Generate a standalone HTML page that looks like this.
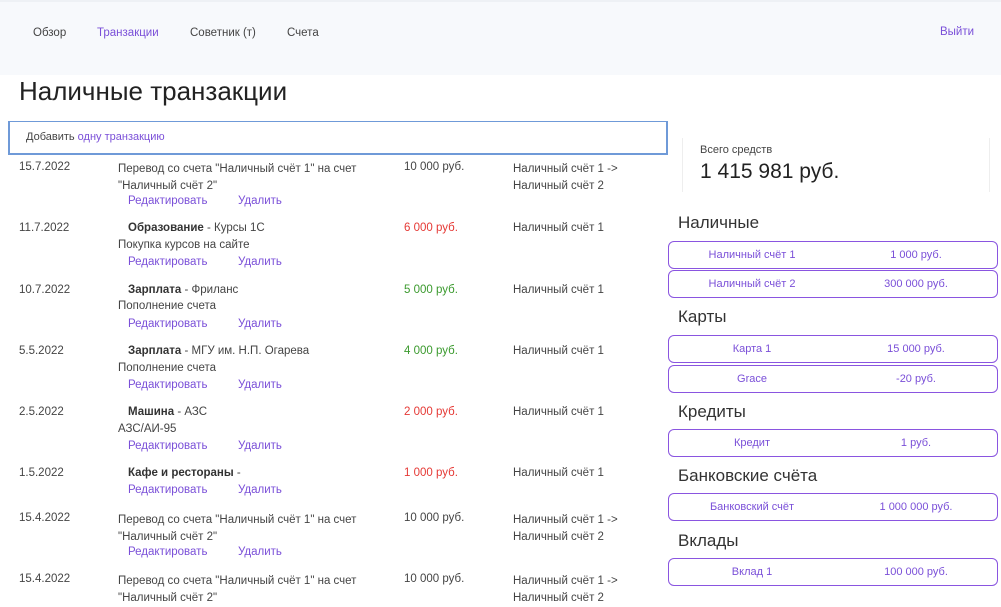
<!DOCTYPE html><html><head><meta charset="utf-8"><style>
*{margin:0;padding:0;box-sizing:border-box}
body{width:1001px;height:595px;overflow:hidden;background:#fff;font-family:"Liberation Sans",sans-serif;color:#444;font-size:11.5px;position:relative}
.a{position:absolute;white-space:nowrap}
.nav{position:absolute;left:0;top:0;width:1001px;height:75px;background:#f7f9fc;border-top:2px solid #eef1f5}
.p{color:#7a4fd8}
.r{color:#e53935}.g{color:#3b9a2e}
b{color:#333}
.pill{position:absolute;left:668px;width:330px;height:28px;border:1px solid #8a55e0;border-radius:6px;color:#7a4fd8;font-size:11px}
.pill span{position:absolute;top:7px;transform:translateX(-50%)}
.h{position:absolute;left:678px;font-size:17px;color:#333}
</style></head><body>
<div class="nav"></div>
<div class="a" style="left:33px;top:27px">Обзор</div>
<div class="a p" style="left:97px;top:27px">Транзакции</div>
<div class="a" style="left:190px;top:27px">Советник (т)</div>
<div class="a" style="left:287px;top:27px">Счета</div>
<div class="a p" style="left:940px;top:26px">Выйти</div>
<div class="a" style="left:19px;top:76px;font-size:26px;color:#222">Наличные транзакции</div>
<div class="a" style="left:8px;top:121px;width:660px;height:34px;border:2px solid #6f9ad8;border-top-width:1px"></div>
<div class="a" style="left:26px;top:131px;font-size:11px">Добавить <span class="p">одну транзакцию</span></div>

<div class="a" style="left:19px;top:161px">15.7.2022</div>
<div class="a" style="left:118px;top:161px;line-height:17px">Перевод со счета "Наличный счёт 1" на счет<br>"Наличный счёт 2"</div>
<div class="a" style="left:404px;top:161px">10 000 руб.</div>
<div class="a" style="left:513px;top:161px;line-height:17px">Наличный счёт 1 -&gt;<br>Наличный счёт 2</div>
<div class="a p" style="left:128px;top:195px">Редактировать</div><div class="a p" style="left:238px;top:195px">Удалить</div>

<div class="a" style="left:19px;top:222px">11.7.2022</div>
<div class="a" style="left:128px;top:222px"><b>Образование</b> - Курсы 1С</div>
<div class="a" style="left:118px;top:239px">Покупка курсов на сайте</div>
<div class="a r" style="left:404px;top:222px">6 000 руб.</div>
<div class="a" style="left:513px;top:222px">Наличный счёт 1</div>
<div class="a p" style="left:128px;top:256px">Редактировать</div><div class="a p" style="left:238px;top:256px">Удалить</div>

<div class="a" style="left:19px;top:284px">10.7.2022</div>
<div class="a" style="left:128px;top:284px"><b>Зарплата</b> - Фриланс</div>
<div class="a" style="left:118px;top:300px">Пополнение счета</div>
<div class="a g" style="left:404px;top:284px">5 000 руб.</div>
<div class="a" style="left:513px;top:284px">Наличный счёт 1</div>
<div class="a p" style="left:128px;top:318px">Редактировать</div><div class="a p" style="left:238px;top:318px">Удалить</div>

<div class="a" style="left:19px;top:345px">5.5.2022</div>
<div class="a" style="left:128px;top:345px"><b>Зарплата</b> - МГУ им. Н.П. Огарева</div>
<div class="a" style="left:118px;top:362px">Пополнение счета</div>
<div class="a g" style="left:404px;top:345px">4 000 руб.</div>
<div class="a" style="left:513px;top:345px">Наличный счёт 1</div>
<div class="a p" style="left:128px;top:379px">Редактировать</div><div class="a p" style="left:238px;top:379px">Удалить</div>

<div class="a" style="left:19px;top:406px">2.5.2022</div>
<div class="a" style="left:128px;top:406px"><b>Машина</b> - АЗС</div>
<div class="a" style="left:118px;top:423px">АЗС/АИ-95</div>
<div class="a r" style="left:404px;top:406px">2 000 руб.</div>
<div class="a" style="left:513px;top:406px">Наличный счёт 1</div>
<div class="a p" style="left:128px;top:440px">Редактировать</div><div class="a p" style="left:238px;top:440px">Удалить</div>

<div class="a" style="left:19px;top:467px">1.5.2022</div>
<div class="a" style="left:128px;top:467px"><b>Кафе и рестораны</b> -</div>
<div class="a r" style="left:404px;top:467px">1 000 руб.</div>
<div class="a" style="left:513px;top:467px">Наличный счёт 1</div>
<div class="a p" style="left:128px;top:484px">Редактировать</div><div class="a p" style="left:238px;top:484px">Удалить</div>

<div class="a" style="left:19px;top:512px">15.4.2022</div>
<div class="a" style="left:118px;top:512px;line-height:17px">Перевод со счета "Наличный счёт 1" на счет<br>"Наличный счёт 2"</div>
<div class="a" style="left:404px;top:512px">10 000 руб.</div>
<div class="a" style="left:513px;top:512px;line-height:17px">Наличный счёт 1 -&gt;<br>Наличный счёт 2</div>
<div class="a p" style="left:128px;top:546px">Редактировать</div><div class="a p" style="left:238px;top:546px">Удалить</div>

<div class="a" style="left:19px;top:573px">15.4.2022</div>
<div class="a" style="left:118px;top:573px;line-height:17px">Перевод со счета "Наличный счёт 1" на счет<br>"Наличный счёт 2"</div>
<div class="a" style="left:404px;top:573px">10 000 руб.</div>
<div class="a" style="left:513px;top:573px;line-height:17px">Наличный счёт 1 -&gt;<br>Наличный счёт 2</div>

<div class="a" style="left:682px;top:138px;width:308px;height:54px;border-left:1px solid #eee;border-right:1px solid #eee"></div>
<div class="a" style="left:700px;top:144px;font-size:11px">Всего средств</div>
<div class="a" style="left:700px;top:160px;font-size:21px;color:#222">1 415 981 руб.</div>

<div class="h" style="top:213px">Наличные</div>
<div class="pill" style="top:241px"><span style="left:83px">Наличный счёт 1</span><span style="left:247px">1 000 руб.</span></div>
<div class="pill" style="top:270px"><span style="left:83px">Наличный счёт 2</span><span style="left:247px">300 000 руб.</span></div>
<div class="h" style="top:307px">Карты</div>
<div class="pill" style="top:335px"><span style="left:83px">Карта 1</span><span style="left:247px">15 000 руб.</span></div>
<div class="pill" style="top:365px"><span style="left:83px">Grace</span><span style="left:247px">-20 руб.</span></div>
<div class="h" style="top:402px">Кредиты</div>
<div class="pill" style="top:429px"><span style="left:83px">Кредит</span><span style="left:247px">1 руб.</span></div>
<div class="h" style="top:466px">Банковские счёта</div>
<div class="pill" style="top:493px"><span style="left:83px">Банковский счёт</span><span style="left:247px">1 000 000 руб.</span></div>
<div class="h" style="top:531px">Вклады</div>
<div class="pill" style="top:558px"><span style="left:83px">Вклад 1</span><span style="left:247px">100 000 руб.</span></div>
</body></html>
